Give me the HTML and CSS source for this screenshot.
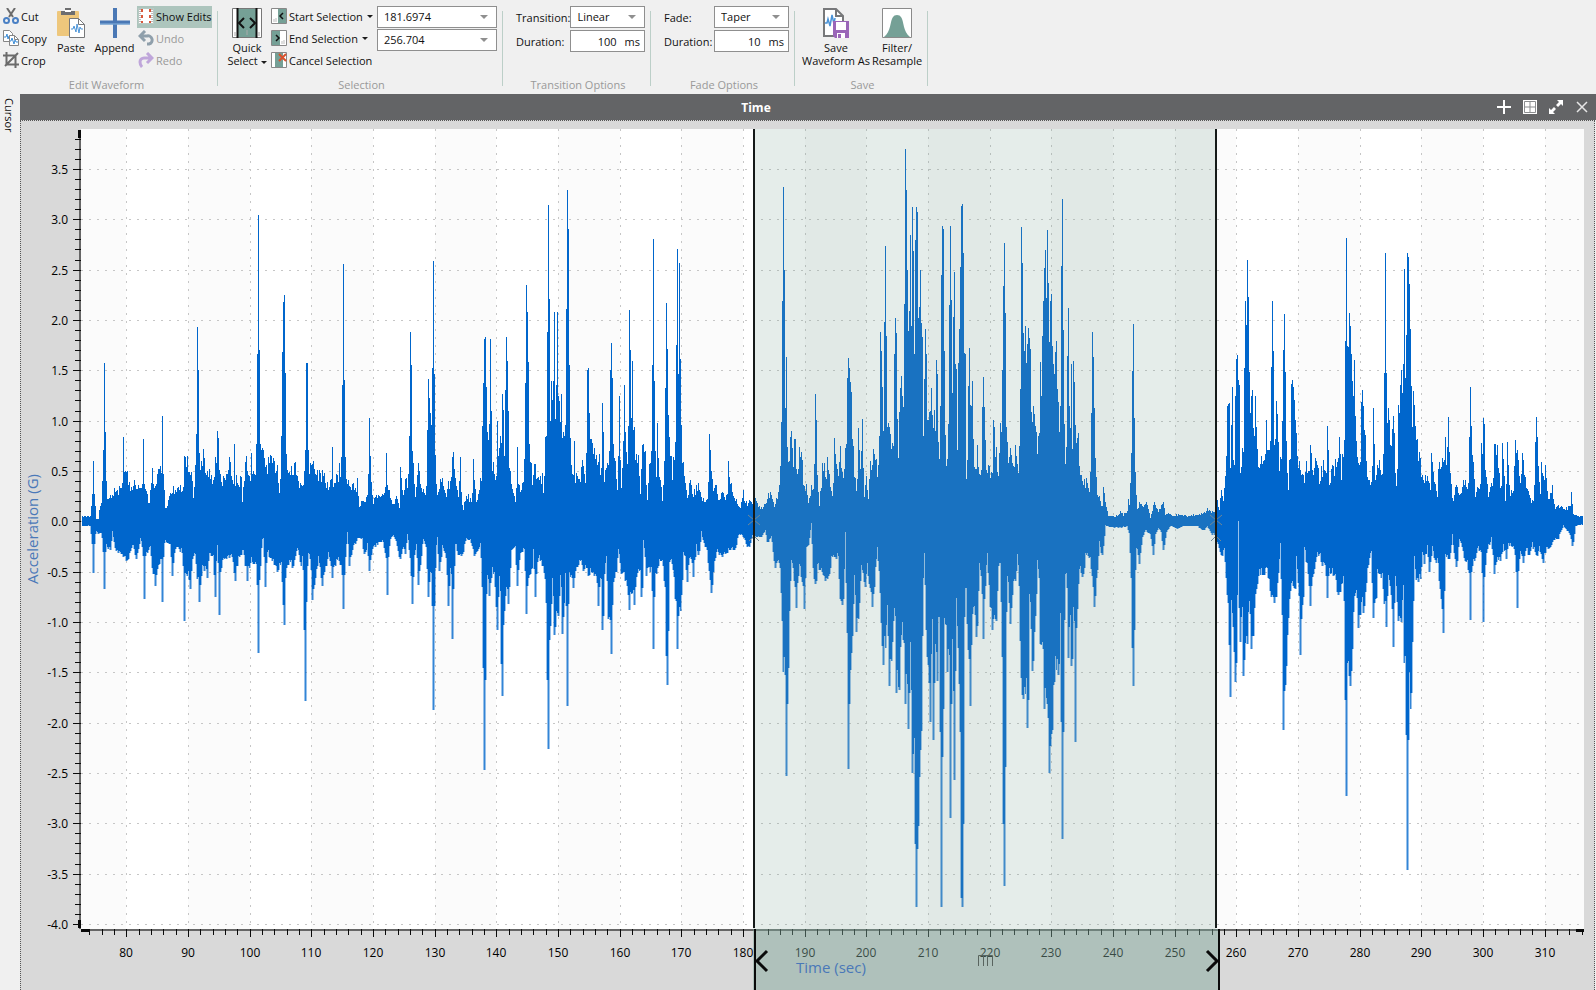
FILE: index.html
```html
<!DOCTYPE html>
<html lang="en">
<head>
<meta charset="utf-8">
<title>Waveform Editor</title>
<link rel="stylesheet" href="styles.css">
</head>
<body>
<div class="app">
  <header class="ribbon">
    <section class="group group-edit">
      <div class="group-body">
        <div class="stack stack-clip">
          <button class="row-btn"><svg class="ico" viewBox="0 0 16 16"><path d="M4 0l6 9M12 0L6 9" stroke="#6b6b6b" stroke-width="2" fill="none"/><circle cx="3.500" cy="12.500" r="2.500" fill="none" stroke="#4a80c4" stroke-width="2"/><circle cx="12.500" cy="12.500" r="2.500" fill="none" stroke="#4a80c4" stroke-width="2"/></svg>Cut</button>
          <button class="row-btn"><svg class="ico" viewBox="0 0 16 16"><path d="M.5.5h6l3 3v8h-9z" fill="#fff" stroke="#858585"/><path d="M1 7h2l1-3 1 5 1-3h2" stroke="#3d8dd6" fill="none"/><path d="M6.500 5.500h5l4 4v6h-9z" fill="#fff" stroke="#858585"/><path d="M11.500 5.500v4h4" fill="none" stroke="#858585"/><path d="M7 11h1l1-3 2 6 1-4 1 2h2" stroke="#3d8dd6" fill="none"/></svg>Copy</button>
          <button class="row-btn"><svg class="ico" viewBox="0 0 16 16"><path d="M3.500 0v12.500H16M0 3.500h12.500V16M2 14L15 1" stroke="#6b6b6b" stroke-width="2" fill="none"/></svg>Crop</button>
        </div>
        <button class="big-btn big-paste"><svg class="ico-big" viewBox="0 0 30 30"><rect x="1" y="3" width="22" height="25" rx="1" fill="#eec77c"/><path d="M5 7V3h4V0h6v3h4v4z" fill="#6d6e70"/><path d="M9 2h6v2H9z" fill="#fff"/><path d="M13.500 10.500h9l6 6v13h-15z" fill="#fff" stroke="#77787a"/><path d="M22.500 10.500v6h6" fill="none" stroke="#77787a"/><path d="M15 21h2l1-3 2 6 1-8 2 9 1-6 1 2h2" fill="none" stroke="#4b94d8"/></svg><span>Paste</span></button>
        <button class="big-btn big-append"><svg class="ico-big" viewBox="0 0 30 30"><path d="M15 0v30M0 14.500h30" stroke="#4a78b5" stroke-width="4"/><path d="M0 16h30" stroke="#86b4de"/></svg><span>Append</span></button>
        <div class="stack stack-edits">
          <button class="row-btn is-on"><svg class="ico" viewBox="0 0 16 16"><path d="M.5.5h15v15H.5z" fill="#fff" stroke="#b8c9c3"/><path d="M2 1v14M14 1v14" stroke="#777" stroke-dasharray="1 1"/><path d="M4 1v14M12 1v14" stroke="#d9583b" stroke-width="2" stroke-dasharray="3 3"/></svg>Show Edits</button>
          <button class="row-btn" disabled><svg class="ico" viewBox="0 0 16 16"><path d="M7 1L2 6l5 5M2 6h7a4 4 0 0 1 2 8h-2" stroke="#8f9fab" stroke-width="3" fill="none"/></svg>Undo</button>
          <button class="row-btn" disabled><svg class="ico" viewBox="0 0 16 16"><path d="M9 1l5 5-5 5M14 6H6a4 4 0 0 0-4 4q0 3 2 5" stroke="#bfa6da" stroke-width="3" fill="none"/></svg>Redo</button>
        </div>
      </div>
      <h2 class="group-name">Edit Waveform</h2>
    </section>

    <section class="group group-select">
      <div class="group-body">
        <button class="big-btn big-quick"><svg class="ico-big" viewBox="0 0 30 30"><path d="M.5.5h29v29H.5z" fill="#fff" stroke="#777"/><path d="M6 1h18v28H6z" fill="#75a096"/><path d="M5.500 0v30M24.500 0v30" stroke="#111" stroke-width="2"/><path d="M12 10l-5 5 5 5M18 10l5 5-5 5" fill="none" stroke="#111" stroke-width="2"/><path d="M15 22v5M3 24v4M27 24v4" stroke="#aaa"/></svg><span>Quick<br>Select <i class="caret"></i></span></button>
        <div class="stack stack-select">
          <button class="row-btn"><svg class="ico" viewBox="0 0 16 16"><path d="M.5.5h15v15H.5z" fill="#fff" stroke="#888"/><path d="M7 1h8v14H7z" fill="#75a096"/><path d="M12 5L9 8l3 3" fill="none" stroke="#111" stroke-width="1.500"/><path d="M3 11v3M5 10v4" stroke="#bbb"/></svg>Start Selection<i class="caret caret-gap"></i></button>
          <button class="row-btn"><svg class="ico" viewBox="0 0 16 16"><path d="M.5.5h15v15H.5z" fill="#fff" stroke="#888"/><path d="M1 1h8v14H1z" fill="#75a096"/><path d="M5 5l3 3-3 3" fill="none" stroke="#111" stroke-width="1.500"/><path d="M11 11v3M13 10v4" stroke="#bbb"/></svg>End Selection<i class="caret caret-gap"></i></button>
          <button class="row-btn"><svg class="ico" viewBox="0 0 16 16"><path d="M.5.5h15v15H.5z" fill="#fff" stroke="#888"/><path d="M4 1h8v14H4z" fill="#75a096"/><path d="M8 2l7 7M15 2L8 9" stroke="#d9512c" stroke-width="2"/></svg>Cancel Selection</button>
        </div>
        <div class="fields fields-range">
          <div class="combo"><select aria-label="Selection start"><option>181.6974</option></select></div>
          <div class="combo"><select aria-label="Selection end"><option>256.704</option></select></div>
        </div>
      </div>
      <h2 class="group-name">Selection</h2>
    </section>

    <section class="group group-transition">
      <div class="group-body fields">
        <div class="field"><label for="transition">Transition:</label><div class="combo"><select id="transition"><option>Linear</option></select></div></div>
        <div class="field"><label for="tduration">Duration:</label><div class="unit-box"><input id="tduration" type="text" value="100"><span>ms</span></div></div>
      </div>
      <h2 class="group-name">Transition Options</h2>
    </section>

    <section class="group group-fade">
      <div class="group-body fields">
        <div class="field"><label for="fade">Fade:</label><div class="combo"><select id="fade"><option>Taper</option></select></div></div>
        <div class="field"><label for="fduration">Duration:</label><div class="unit-box"><input id="fduration" type="text" value="10"><span>ms</span></div></div>
      </div>
      <h2 class="group-name">Fade Options</h2>
    </section>

    <section class="group group-save">
      <div class="group-body">
        <button class="big-btn big-save"><svg class="ico-big" viewBox="0 0 30 30"><path d="M3 1h12l7 7v20H3z" fill="#fff" stroke="#77787a" stroke-width="2"/><path d="M15 1v7h7" fill="none" stroke="#77787a" stroke-width="2"/><path d="M4 15h2l1-4 2 7 2-11 2 9 1-6" fill="none" stroke="#4b94d8" stroke-width="1.500"/><path d="M12 13h16v17H14l-2-2z" fill="#9a66b8"/><path d="M15 14h10v8H15z" fill="#fff"/><path d="M16 25h8v5h-8z" fill="#fff"/><path d="M17 26h3v4h-3z" fill="#9a66b8"/></svg><span>Save<br>Waveform As</span></button>
        <button class="big-btn big-filter"><svg class="ico-big" viewBox="0 0 30 30"><path d="M.5.5h29v29H.5z" fill="#fff" stroke="#8a8a8a"/><path d="M2 29C9 24 8 13 11 9q1-2 4-2t4 2c3 4 2 15 9 20z" fill="#75a096"/></svg><span>Filter/<br>Resample</span></button>
      </div>
      <h2 class="group-name">Save</h2>
    </section>
  </header>

  <div class="workspace">
    <aside class="side-tab"><button class="side-btn">Cursor</button></aside>
    <main class="panel">
      <div class="panel-head">
        <h1 class="panel-title">Time</h1>
        <div class="panel-tools">
          <button class="tool" aria-label="Add"><svg viewBox="0 0 16 16"><path d="M8 1v14M1 8h14" stroke="#fff" stroke-width="2"/></svg></button>
          <button class="tool" aria-label="Layout"><svg viewBox="0 0 16 16"><path d="M1 1h14v14H1z" fill="#fff"/><path d="M2.500 2.500h11v11h-11zM8 3v10M3 8h10" fill="none" stroke="#8b8d8f"/></svg></button>
          <button class="tool" aria-label="Expand"><svg viewBox="0 0 16 16"><path d="M9 1h6v6l-2-2-3 3-2-2 3-3zM7 15H1V9l2 2 3-3 2 2-3 3z" fill="#fff"/></svg></button>
          <button class="tool" aria-label="Close"><svg viewBox="0 0 16 16"><path d="M3 3l10 10M13 3L3 13" stroke="#e6e6e6" stroke-width="1.500"/></svg></button>
        </div>
      </div>
      <div class="panel-body"><svg class="chart" id="chart" role="img" aria-label="Acceleration over time"></svg></div>
    </main>
  </div>
</div>
<script src="chart.js"></script>
</body>
</html>
```

FILE: styles.css
```css
* { box-sizing: border-box; }
body {
  margin: 0;
  background: #f0f0f0;
  color: #111;
  font-family: "Open Sans", "Noto Sans", sans-serif;
  font-size: 11px;
  line-height: 13px;
}
button, input, select { font: inherit; color: inherit; }
button { border: 0; padding: 0; background: none; }
h1, h2 { margin: 0; font-size: inherit; }

.app { display: flex; flex-direction: column; height: 100vh; }

.ribbon { display: flex; flex: none; height: 94px; padding-top: 6px; }
.group {
  position: relative;
  display: flex;
  flex-direction: column;
  justify-content: space-between;
  flex: none;
  padding-bottom: 2px;
}
.group::after {
  content: "";
  position: absolute;
  top: 5px;
  right: 0;
  bottom: 8px;
  width: 1px;
  background: #bccfc8;
}
.group-edit { width: 218px; }
.group-select { width: 285px; }
.group-transition { width: 148px; }
.group-fade { width: 144px; }
.group-save { width: 133px; }
.group-body { display: flex; }
.group-name { padding-left: 2px; text-align: center; font-weight: 400; line-height: 14px; color: #999; }
.group-edit .group-name { padding: 0 5px 0 0; }

.stack { display: flex; flex-direction: column; }
.row-btn { display: flex; align-items: center; gap: 2px; height: 22px; padding-bottom: 2px; white-space: nowrap; }
.row-btn:disabled { color: #999; }
.row-btn.is-on { background: #adc5bd; }
.ico { width: 16px; height: 16px; flex: none; }
.ico-big { width: 30px; height: 30px; flex: none; }
.big-btn { display: flex; flex-direction: column; align-items: center; gap: 3px; padding-top: 2px; white-space: nowrap; }
.stack-clip { width: 50px; padding-left: 3px; }
.big-paste { width: 42px; }
.big-append { width: 45px; }
.stack-edits { width: 75px; }
.stack-edits .row-btn { padding-left: 1px; }
.big-quick { width: 42px; margin-left: 8px; }
.stack-select { width: 94px; margin-left: 3px; }
.caret {
  display: inline-block;
  border: 3px solid transparent;
  border-top: 3px solid #1c1c1c;
  border-bottom: 0;
  vertical-align: middle;
}
.caret-gap { margin-left: 2px; }

.fields { display: flex; flex-direction: column; gap: 2px; }
.fields-range { gap: 1px; width: 120px; margin-left: 12px; }
.group-transition .fields { padding: 0 6px 0 13px; }
.group-fade .fields { padding: 0 6px 0 13px; }
.field { display: flex; align-items: center; justify-content: space-between; }
.field .combo, .field .unit-box { width: 75px; }
.combo { position: relative; height: 22px; }
.combo::after {
  content: "";
  position: absolute;
  top: 9px;
  right: 9px;
  border: 4px solid transparent;
  border-top: 4px solid #8f8f8f;
  border-bottom: 0;
  pointer-events: none;
}
.combo select {
  display: block;
  appearance: none;
  width: 100%;
  height: 100%;
  padding: 0 20px 2px 6px;
  border: 1px solid #8f8f8f;
  border-radius: 0;
  background: #fff;
}
.unit-box {
  display: flex;
  align-items: center;
  gap: 8px;
  height: 22px;
  padding-right: 4px;
  border: 1px solid #8f8f8f;
  background: #fff;
}
.unit-box input { flex: 1; min-width: 0; padding: 0; border: 0; background: none; text-align: right; }

.big-save { width: 66px; margin-left: 8px; }
.big-filter { width: 50px; margin-left: 3px; }

.workspace { display: flex; flex: 1; min-height: 0; }
.side-tab { width: 20px; flex: none; padding-top: 4px; }
.side-btn { width: 19px; writing-mode: vertical-rl; line-height: 19px; }
.panel { display: flex; flex-direction: column; flex: 1; min-width: 0; }
.panel-head { display: flex; align-items: center; justify-content: center; position: relative; height: 26px; background: #636466; color: #fff; }
.panel-title { padding-right: 104px; font-size: 12px; font-weight: 700; }
.panel-tools { position: absolute; right: 6px; display: flex; gap: 10px; }
.tool { display: flex; width: 16px; height: 16px; }
.tool svg { width: 16px; height: 16px; }
.panel-body {
  flex: 1;
  min-height: 0;
  margin-right: 1px;
  border: 1px dotted #555;
  border-bottom: 0;
  background: #d9d9d9;
}
.chart { display: block; width: 100%; height: 100%; overflow: hidden; font-size: 12px; }

.plot-bg { fill: #fff; }
.plot-band { fill: #fbfbfb; }
.grid-line { stroke: #c6c6c6; stroke-dasharray: 2 6; }
.axis { fill: #666; }
.mark { fill: #0a0a0a; }
.axis-text { fill: #000; }
.axis-title { fill: #4a78b8; font-size: 15px; line-height: 15px; }
.wave { fill: #0066cc; }
.wave-halo { fill: #0066cc; fill-opacity: 0.4; }
.wave-edge { fill: #0066cc; fill-opacity: 0.8; }
.sel-plot { fill: #7da596; fill-opacity: 0.2; }
.sel-axis { fill: #7da596; fill-opacity: 0.45; }
.sel-line { fill: #151a19; }
.chevron { fill: none; stroke: #0a0a0a; stroke-width: 3; }
.grip { fill: none; stroke: #59645f; }
.cross { fill: none; stroke: #6f8796; }
```

FILE: chart.js
```js
// Envelope of the recording, in four strips. Each strip has its own origin,
// vertical scale and zero level; points are "x y" pairs in strip units.
const strips = [
  {
    from: 0, x0: 0, k: 3, zero: 364, end: 1200,
    up: "246 349 270 349 275 330 284 330 288 357 294 357 300 310 306 295 318 300 325 300 335 275 345 270 355 268 365 262 370 215 380 215 385 245 395 262 402 235 410 255 418 265 428 262 438 280 448 305 455 215 462 245 470 225 478 220 485 200 490 220 494 325 501 322 506 275 516 262 530 268 545 262 549 270 552 180 560 185 572 195 578 285 586 200 600 190 610 170 625 205 637 245 645 180 658 200 667 245 680 225 690 200 700 230 712 240 722 240 727 310 735 195 745 230 755 200 765 230 775 200 785 155 795 190 810 185 830 190 838 265 845 180 850 170 862 190 875 195 885 185 900 255 905 265 912 200 925 200 932 190 945 195 955 220 970 225 980 250 1000 245 1015 220 1025 220 1035 240 1045 245 1060 260 1070 265 1078 320 1085 295 1102 295 1106 225 1115 270 1120 300 1130 290 1150 290 1157 240 1170 280 1180 310 1190 290 1196 325 1202 230",
    upPeaks: "280 183 313 -111 316 96 370 111 431 117 487 48 554 170 592 -219 595 -90 610 147 652 93 655 114 688 171 703 132 739 168 754 160 775 -555 772 -138 778 -150 785 152 850 -294 853 -315 847 -144 856 -81 844 110 919 -111 922 -111 997 141 1018 190 1030 -408 1027 -45 1033 -60 1072 235 1108 54 1111 170 1159 159",
    down: "246 380 272 378 277 380 284 395 290 405 303 400 307 395 318 440 330 460 336 400 345 455 360 470 378 490 390 465 400 440 408 490 415 455 420 420 430 460 440 470 450 440 458 540 466 555 474 500 484 480 492 430 500 430 510 440 517 525 525 450 540 460 548 460 552 540 565 535 571 560 578 470 585 475 592 540 600 580 605 510 612 515 622 530 628 470 640 475 646 580 650 425 658 540 666 490 680 485 695 480 705 540 715 480 730 460 742 540 750 490 768 510 775 600 782 450 788 400 796 550 802 460 815 495 830 520 843 500 850 600 860 500 870 490 880 515 890 450 902 500 908 440 914 600 922 470 930 480 938 590 947 530 955 490 967 560 975 520 985 470 997 530 1010 480 1022 520 1030 590 1040 380 1048 490 1060 445 1075 415 1085 420 1093 480 1100 440 1108 510 1115 450 1130 438 1150 430 1162 500 1170 420 1180 412 1190 440 1200 500",
    downPeaks: "280 520 313 568 433 599 466 558 487 607 517 530 554 664 571 569 598 606 622 535 646 592 658 647 706 543 742 545 775 759 796 562 853 675 850 617 916 905 914 690 937 602 967 558 997 535 1030 627 1048 500 1108 515 1162 585"
  },
  {
    x0: 400, k: 2.45, zero: 910, end: 1064,
    up: "0 785 8 840 15 800 25 845 30 665 40 780 46 848 55 770 62 835 70 820 77 848 82 640 90 665 95 715 106 842 115 828 121 800 130 820 137 845 143 812 150 820 157 760 166 800 175 840 180 800 187 892 196 855 205 850 215 862 221 800 228 862 236 818 242 808 247 690 262 690 265 720 271 640 277 770 287 798 292 720 298 745 305 650 313 745 319 600 328 750 333 800 345 865 352 790 358 825 370 820 378 600 388 700 397 820 404 765 415 812 425 795 428 842 434 710 440 740 444 600 451 685 455 575 466 625 475 590 482 660 490 660 495 720 500 650 508 600 514 755 520 790 530 800 540 805 545 770 555 815 560 660 575 675 582 738 595 740 602 785 608 680 613 795 622 760 630 700 645 760 650 820 656 700 664 828 671 640 682 780 688 630 697 640 706 730 714 760 719 828 727 730 735 740 740 860 746 740 755 750 762 620 766 866 772 750 780 800 787 852 796 700 806 680 815 793 821 735 826 765 831 600 840 620 845 755 853 802 862 850 871 805 880 840 895 820 905 850 915 858 923 845 928 760 935 800 940 830 947 805 955 850 970 840 980 855 986 800 998 850 1010 860 1020 878 1030 840 1040 870 1050 855 1060 880 1065 855",
    upPeaks: "31 448 34 529 100 272 97 534 103 551 85 563 88 608 55 767 160 742 181 752 220 757 253 465 256 458 250 571 259 581 271 465 274 640 292 664 307 600 310 638 319 458 322 519 325 640 316 588 352 728 379 333 382 397 385 521 376 571 445 137 448 365 442 448 454 566 463 399 460 568 472 399 469 576 484 598 502 100 505 194 499 390 508 527 523 713 565 534 562 541 607 622 634 473 631 541 637 559 658 603 673 576 688 394 691 492 697 519 760 220 757 527 763 566 772 671 799 375 802 488 796 583 805 650 832 243 829 480 838 277 835 549 841 512 928 696 931 735 985 764 1030 833",
    down: "0 1020 7 980 15 990 22 945 30 1000 37 1100 42 1000 48 970 55 1060 62 1000 68 955 78 980 85 1080 92 1040 98 1200 104 1000 110 955 118 1035 126 980 138 1010 145 1100 152 1020 157 1150 165 970 176 1000 186 1000 195 960 210 955 221 1000 232 985 240 970 247 1020 253 1200 262 1060 268 1080 275 1040 283 1050 292 1160 298 1050 307 1200 315 1100 326 1100 332 990 345 980 352 1060 360 990 372 985 379 1120 388 1050 396 1030 400 985 406 1080 413 1000 425 1020 434 1070 440 1180 447 1240 452 1140 456 1050 463 1185 474 1155 480 1050 488 1170 495 1060 502 1200 508 1040 520 1070 530 1030 542 1010 550 1050 556 1020 563 1055 572 1040 580 1055 588 1060 595 1110 602 1060 608 1150 613 1050 618 1010 625 1140 634 1200 640 1080 648 1040 655 980 662 1050 675 1060 688 1120 695 1090 703 1100 712 1050 720 1045 725 1090 730 940 738 1050 745 1040 752 1035 760 1180 766 1050 772 1040 780 1010 790 1030 797 1120 803 1180 808 1000 816 1020 823 1070 832 1180 842 1120 848 990 856 1010 862 1055 870 1000 880 1045 887 975 895 1005 902 940 915 980 922 985 928 1055 935 1080 942 1020 950 980 957 1000 967 1005 980 990 992 985 1005 980 1015 945 1030 950 1038 970 1048 980 1056 945 1070 950",
    downPeaks: "37 1114 55 1068 85 1097 100 1374 145 1119 157 1200 253 1519 250 1270 256 1300 268 1093 292 1177 307 1339 304 1260 325 1114 352 1070 379 1139 406 1097 445 1468 442 1300 463 1190 487 1187 502 1364 520 1075 595 1119 607 1177 625 1150 634 1237 688 1129 703 1116 725 1097 760 1223 802 1312 799 1240 832 1223 841 1131 862 1060 880 1048 934 1087"
  },
  {
    x0: 740, k: 1.96, zero: 786.5, end: 1430,
    up: "45 742 55 755 65 762 75 750 90 728 103 758 112 735 120 710 125 640 135 615 142 640 148 670 152 625 160 665 165 630 170 690 177 645 186 650 190 705 198 720 205 753 213 720 220 740 224 650 232 690 236 750 245 690 252 680 258 712 263 680 270 720 278 730 284 655 294 705 301 650 310 705 315 640 322 600 337 595 342 680 350 730 356 620 360 665 366 600 373 730 377 685 383 745 390 665 398 675 404 650 410 700 416 665 420 560 430 615 434 560 445 600 455 620 458 645 465 530 474 635 482 530 491 600 495 450 505 445 512 400 525 405 545 400 550 625 556 520 562 560 570 590 577 540 585 605 590 540 598 710 602 500 612 500 617 685 625 640 628 480 648 480 650 660 656 475 674 480 678 715 685 600 692 560 700 620 704 690 711 645 718 690 722 715 726 640 735 640 738 680 750 685 756 700 762 610 768 700 775 690 782 600 788 590 800 610 805 680 812 650 820 680 828 650 835 695 840 600 845 430 858 440 870 465 875 580 886 595 890 655 897 600 902 500 910 450 925 360 937 400 941 600 946 500 953 560 958 600 965 500 972 600 977 720 983 560 992 580 997 630 1002 600 1008 640 1013 630 1020 695 1030 705 1040 705 1050 725 1055 640 1065 640 1070 730 1080 740 1085 770 1088 775 1091 730 1096 745 1103 775 1125 778 1140 768 1150 774 1162 765 1170 745 1172 770 1175 690 1184 690 1187 772 1197 745 1205 760 1218 740 1230 780 1243 750 1255 768 1268 742 1275 775 1285 770 1300 776 1320 773 1340 776 1370 773 1390 772 1400 762 1415 768 1430 768",
    upPeaks: "130 131 133 294 127 355 139 465 152 621 163 626 178 641 226 537 229 588 248 673 263 662 284 623 301 640 325 468 328 486 331 515 334 533 322 506 355 604 367 596 401 645 421 417 424 453 427 523 436 247 433 396 439 423 466 388 469 419 463 459 484 502 481 525 487 551 478 572 496 57 499 137 502 294 493 361 511 225 508 374 517 171 520 257 514 404 529 172 532 180 526 235 541 294 538 368 535 388 544 398 556 410 559 459 553 508 574 525 589 470 592 498 607 208 610 214 604 304 613 453 601 561 631 208 634 353 628 363 643 298 640 386 646 478 667 165 664 169 670 261 661 288 658 410 673 457 655 476 688 447 697 512 685 521 691 560 730 504 727 563 733 563 760 588 769 641 781 594 793 241 790 325 796 378 787 490 811 643 826 637 844 210 847 280 850 419 856 427 865 408 868 427 862 440 880 561 901 474 907 423 913 290 910 355 916 255 919 349 922 216 925 320 934 341 931 355 937 461 949 433 946 455 943 498 952 527 967 155 964 286 970 412 985 370 982 463 988 563 994 478 1000 472 1003 514 1006 598 1012 623 1057 416 1060 466 1054 574 1063 566 1180 400 1177 492 1183 584 1090 719 1166 743",
    down: "45 820 62 818 75 805 82 832 92 818 104 880 115 870 120 880 127 1000 133 1080 140 1170 146 980 152 870 160 890 169 950 177 880 186 915 193 960 199 840 205 840 212 790 220 880 226 930 232 880 244 890 256 905 266 900 272 865 285 862 293 858 299 950 308 955 315 810 322 950 328 1150 335 1035 341 910 350 1000 358 960 364 880 374 920 382 880 390 930 398 950 405 890 412 840 418 900 424 1000 430 1065 437 1020 441 955 448 1100 455 1060 461 970 466 990 470 1115 478 1110 486 1000 494 1100 497 1140 505 1190 509 1060 517 1270 524 1280 529 1480 536 1350 543 1200 548 900 553 850 560 1080 564 1110 571 1170 575 1000 580 1210 584 1030 590 1130 594 1000 597 880 603 1250 609 1220 612 980 617 1000 622 1120 626 1020 631 1280 637 1020 643 1240 647 960 655 1050 661 1200 668 1400 673 930 679 930 685 1070 691 1140 697 980 703 970 710 1010 716 880 722 900 730 1010 737 880 741 850 748 935 757 1000 767 990 773 890 781 880 788 1130 794 1300 799 880 804 920 811 985 818 910 824 920 831 855 838 920 844 1140 852 1150 858 1120 863 1180 868 940 873 1010 878 1075 884 990 890 870 896 910 901 1030 907 1040 914 1150 919 1180 928 1275 935 1200 943 1110 950 1080 956 1100 960 990 967 1200 974 890 980 920 985 1050 990 1000 995 1065 1001 900 1006 1100 1012 970 1018 880 1028 905 1035 860 1050 860 1057 910 1063 950 1070 900 1076 830 1087 860 1094 795 1103 798 1125 800 1140 800 1160 797 1170 820 1180 830 1187 840 1198 875 1206 820 1215 805 1230 815 1240 855 1246 815 1255 800 1263 810 1270 848 1278 810 1290 797 1310 803 1325 797 1370 797 1388 806 1400 797 1415 815 1430 812",
    downPeaks: "139 1287 130 1083 169 957 325 1273 349 1005 397 955 430 1068 448 1110 470 1123 478 1118 497 1146 505 1195 517 1280 529 1543 526 1420 532 1430 535 1370 571 1180 580 1215 604 1543 607 1250 601 1200 631 1368 643 1294 667 1543 664 1525 661 1200 691 1149 710 1014 730 1018 757 1001 793 1501 790 1380 811 988 862 1193 877 1080 913 1155 928 1280 934 1203 967 1410 970 1200 964 1180 985 1055 994 1070 1006 1220 1063 955 1180 1110 1177 1035 1183 1000"
  },
  {
    x0: 1190, k: 2.24, zero: 719.7, end: 1180,
    up: "78 668 87 690 94 655 100 670 105 620 109 540 113 470 119 465 121 630 126 520 133 590 138 440 146 420 151 595 157 565 161 610 165 380 170 290 178 380 181 485 186 450 191 540 196 470 200 550 205 608 213 572 222 595 228 520 235 540 243 560 245 400 250 420 253 560 260 500 266 600 275 570 278 490 285 490 292 600 295 640 303 500 310 440 317 500 320 578 328 580 335 600 343 640 348 595 358 605 362 560 370 615 379 580 388 625 398 590 405 615 412 560 418 630 427 600 432 605 437 570 447 540 453 610 460 555 466 540 469 340 480 350 490 440 498 510 500 580 510 555 516 470 525 540 530 610 543 640 550 545 556 620 562 585 570 600 580 630 585 400 590 500 595 500 601 540 610 510 615 610 620 645 625 480 637 430 646 400 655 300 662 380 668 540 675 480 684 560 695 610 703 635 710 602 720 655 727 590 740 670 745 600 757 560 766 550 771 600 775 560 785 660 788 670 795 628 805 655 818 635 826 625 835 655 840 560 848 590 855 660 863 645 870 620 877 560 885 600 893 660 905 635 915 560 922 570 932 670 938 570 945 670 952 570 960 660 968 640 975 560 985 590 990 625 997 580 1008 640 1018 665 1030 680 1037 560 1043 600 1050 675 1055 610 1065 605 1075 665 1085 645 1095 690 1110 685 1130 690 1145 680 1150 705 1165 708 1179 709",
    upPeaks: "118 455 115 457 112 461 127 419 124 504 142 347 139 356 136 439 145 403 148 511 157 556 166 226 163 376 169 280 172 134 175 217 178 385 184 439 196 439 187 448 229 493 247 228 244 374 250 340 259 450 262 501 283 255 280 336 286 385 277 495 307 403 304 412 310 419 313 448 316 493 361 549 412 508 415 560 448 531 469 85 466 316 472 327 475 329 478 253 481 284 484 345 487 405 493 358 490 441 496 484 517 426 514 453 520 461 550 466 553 547 586 119 583 388 589 388 595 466 598 493 610 484 613 522 625 459 628 477 634 381 631 414 637 432 643 155 640 367 646 399 652 119 655 128 649 302 658 188 661 289 664 455 670 428 673 459 676 506 688 565 724 567 766 531 775 486 772 553 778 565 841 419 844 506 847 571 838 531 874 544 880 488 883 502 877 582 913 547 922 549 937 544 952 542 976 538 982 560 997 567 1039 486 1036 542 1042 531 1054 587 1144 654",
    down: "78 770 87 785 94 805 103 790 108 850 113 930 120 1080 124 890 130 1000 134 1070 139 1080 143 720 147 950 151 1000 156 930 161 1060 166 1040 172 1000 178 900 184 1000 190 980 196 895 205 845 222 842 232 830 240 890 248 915 257 905 263 850 270 775 276 950 281 1060 287 1080 292 980 300 880 306 870 314 900 319 800 326 900 331 970 338 920 343 780 350 830 361 900 370 840 380 800 390 800 397 835 405 820 412 880 418 840 433 845 442 890 448 905 456 860 463 850 467 1100 475 1080 482 1085 488 930 497 890 505 950 515 920 523 930 530 830 543 795 550 935 557 900 562 840 570 860 577 850 583 910 589 950 594 850 603 900 610 960 616 850 624 945 632 950 638 850 643 1030 648 1080 653 1200 658 1080 662 1130 667 1000 672 800 679 865 690 860 697 800 703 820 712 780 718 850 725 780 735 820 745 815 751 900 760 960 766 800 778 820 785 755 797 835 808 765 815 780 825 820 832 820 841 870 848 820 855 805 865 785 872 800 880 880 887 795 895 780 902 760 912 835 920 815 930 810 938 780 948 805 955 775 968 780 975 800 982 880 990 790 998 820 1008 780 1018 805 1025 775 1037 805 1047 785 1060 815 1068 785 1078 790 1088 765 1105 760 1120 730 1135 745 1148 770 1156 732 1170 728 1179 730",
    downPeaks: "121 1113 136 1080 160 1066 184 1006 280 1187 283 1100 286 1088 331 1020 361 910 412 893 469 1335 466 1120 481 1089 505 959 550 937 589 957 610 1002 643 1037 652 1501 649 1200 655 1210 661 1140 760 971 841 941 880 945 913 839 982 915 1147 775"
  }
];

const BASE_X = 81, SPAN_X = 1503, SPAN_Y = 800;
const T0 = 72.65, T1 = 316.4, V_TOP = 3.897, V_BOTTOM = -4.05;

const up = new Array(SPAN_X).fill(0);
const down = new Array(SPAN_X).fill(0);

let seed = 7;
function rand() {
  seed = (seed * 16807) % 2147483647;
  return seed / 2147483647;
}
function pairs(text) {
  const n = text.split(" ").map(Number);
  const out = [];
  for (let i = 0; i < n.length; i += 2) out.push([n[i], n[i + 1]]);
  return out;
}
function fill(target, strip, text, sign, gain, jitter) {
  const pts = pairs(text);
  for (let p = 0; p < pts.length - 1; p++) {
    const [xa, ya] = pts[p], [xb, yb] = pts[p + 1];
    const a = Math.round(strip.x0 + xa / 3) - BASE_X;
    const b = Math.round(strip.x0 + xb / 3) - BASE_X;
    for (let i = a; i <= b; i++) {
      if (i < 0 || i >= SPAN_X || i + BASE_X > strip.x0 + strip.end / 3) continue;
      const y = ya + (yb - ya) * (b > a ? (i - a) / (b - a) : 0);
      const v = sign * (strip.zero - y) / strip.k;
      target[i] = Math.max(0, v * (gain - jitter * rand()));
    }
  }
}
function peaks(target, strip, text, sign) {
  const falloff = [1, 0.45, 0.25];
  for (const [x, y] of pairs(text)) {
    const c = Math.floor(strip.x0 + x / 3) - BASE_X;
    const v = sign * (strip.zero - y) / strip.k;
    for (let d = -2; d <= 2; d++) {
      const i = c + d;
      if (i >= 0 && i < SPAN_X) target[i] = Math.max(target[i], v * falloff[Math.abs(d)]);
    }
  }
}
for (const s of strips) {
  fill(up, s, s.up, 1, 1.1, 0.3);
  fill(down, s, s.down, -1, 1, 0.16);
}
for (const s of strips) {
  peaks(up, s, s.upPeaks, 1);
  peaks(down, s, s.downPeaks, -1);
}

const svg = document.getElementById("chart");

function add(name, attrs, text) {
  const el = document.createElementNS("http://www.w3.org/2000/svg", name);
  for (const key in attrs) el.setAttribute(key, attrs[key]);
  if (text !== undefined) el.textContent = text;
  svg.appendChild(el);
}
function rect(cls, x, y, width, height) {
  add("rect", { class: cls, x, y, width, height });
}

function draw() {
  svg.textContent = "";
  const W = svg.clientWidth, H = svg.clientHeight;
  const left = 60, top = 8, right = W - 10, bottom = H - 61;
  const pw = right - left, ph = bottom - top;
  const tx = t => left + (t - T0) / (T1 - T0) * pw;
  const vy = v => top + (V_TOP - v) / (V_TOP - V_BOTTOM) * ph;

  rect("plot-bg", left, top, pw, ph);
  for (let t = 70; t < T1; t += 20) {
    const a = Math.max(left, Math.round(tx(t)));
    const b = Math.min(right, Math.round(tx(t + 10)));
    rect("plot-band", a, top, b - a, ph);
  }
  for (let t = 80; t < T1; t += 10) {
    const x = Math.round(tx(t)) + 0.5;
    add("line", { class: "grid-line", x1: x, x2: x, y1: top, y2: bottom });
  }
  for (let v = -40; v <= 35; v += 5) {
    const y = Math.round(vy(v / 10)) + 0.5;
    add("line", { class: "grid-line", x1: left, x2: right, y1: y, y2: y });
  }

  const sx = pw / SPAN_X, sy = ph / SPAN_Y, zero = Math.round(vy(0));
  let body = "", edge = "", halo = "";
  for (let i = 1; i < SPAN_X - 1; i++) {
    if (!up[i] && !down[i]) continue;
    const x = left + i * sx, d = down[i] * sy;
    const solid = Math.min(d, Math.max(down[i - 1], down[i + 1]) * sy);
    const u = Math.round(up[i] * sy);
    const wide = Math.max(down[i - 1], down[i], down[i + 1]) * sy;
    body += `M${x} ${zero - u}h${sx}V${zero + Math.round(solid)}h${-sx}z`;
    if (d > solid) edge += `M${x} ${zero + Math.round(solid)}h${sx}V${zero + Math.round(d)}h${-sx}z`;
    if (wide > d) halo += `M${x} ${zero + Math.round(solid)}h${sx}V${zero + Math.round(wide)}h${-sx}z`;
  }
  add("path", { class: "wave-halo", d: halo });
  add("path", { class: "wave-edge", d: edge });
  add("path", { class: "wave", d: body });

  // value axis
  rect("axis", left - 2, top + 1, 2, ph - 1);
  for (let v = -40; v <= 38; v++) {
    const y = Math.round(vy(v / 10)), major = v % 5 === 0;
    rect("mark", major ? left - 8 : left - 6, y, major ? 8 : 6, 1);
    if (major) add("text", { class: "axis-text", x: left - 13, y: y + 5, "text-anchor": "end" }, (v / 10).toFixed(1));
  }
  rect("mark", left - 3, top + 1, 3, 8);
  rect("mark", left - 3, bottom - 9, 3, 8);

  // time axis
  rect("axis", left, bottom, pw, 2);
  for (let t = 74; t < T1; t += 2) {
    const x = Math.round(tx(t)), major = t % 10 === 0;
    rect("mark", x, bottom, 1, major ? 8 : 6);
    if (major) add("text", { class: "axis-text", x, y: bottom + 28, "text-anchor": "middle" }, t);
  }
  rect("mark", left, bottom, 9, 3);
  rect("mark", right - 8, bottom, 8, 3);

  const my = top + ph / 2;
  add("text", { class: "axis-title", "text-anchor": "middle", transform: `translate(17 ${my}) rotate(-90)` }, "Acceleration (G)");

  // selection
  const s0 = Math.round(tx(181.6974)), s1 = Math.round(tx(256.704));
  rect("sel-plot", s0, top, s1 - s0, ph);
  rect("sel-axis", s0, bottom, s1 - s0 + 4, H - bottom);
  add("text", { class: "axis-title", x: s0 + 43, y: bottom + 44 }, "Time (sec)");
  for (const x of [s0, s1 - 1]) {
    add("path", { class: "cross", d: `M${x - 5} ${zero - 6}l12 10m0-10l-12 10m1 16l5-5 5 5` });
    rect("sel-line", x, top, 2, ph - 1);
  }
  rect("mark", s0 + 1, bottom, 2, H - bottom);
  rect("mark", s1 + 2, bottom, 2, H - bottom);
  const cy = bottom + 32;
  add("path", { class: "chevron", d: `M${s0 + 14} ${cy - 10}l-10 10 10 10M${s1 - 9} ${cy - 10}l10 10-10 10` });
  const gx = Math.round((s0 + s1) / 2) - 7;
  add("path", { class: "grip", d: `M${gx + 0.5} ${cy + 5}v-10.5h14v10.5m-5 0v-10.5m-4 0v10.5` });
}

draw();
window.addEventListener("resize", draw);
```
